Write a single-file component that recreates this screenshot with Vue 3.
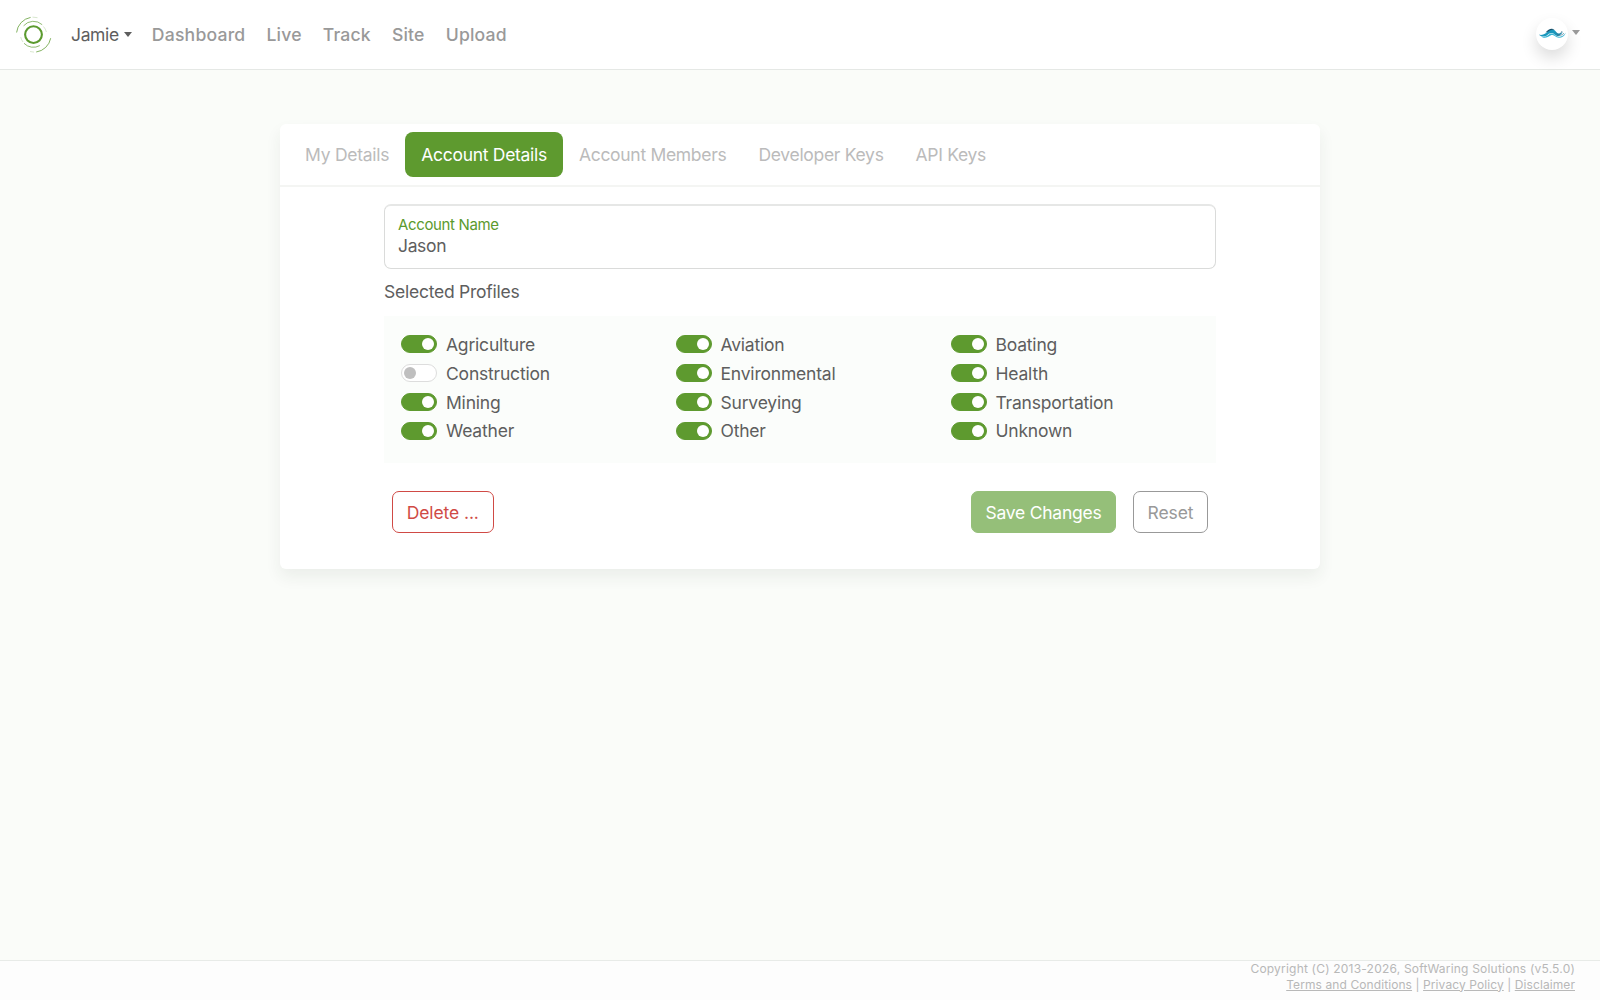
<script setup>
import { ref, reactive } from 'vue'

const links = ['Dashboard', 'Live', 'Track', 'Site', 'Upload']
const tabs = ['My Details', 'Account Details', 'Account Members', 'Developer Keys', 'API Keys']
const activeTab = ref('Account Details')
const accountName = ref('Jason')
const profiles = reactive([
  'Agriculture', 'Aviation', 'Boating',
  'Construction', 'Environmental', 'Health',
  'Mining', 'Surveying', 'Transportation',
  'Weather', 'Other', 'Unknown',
].map((name) => ({ name, on: name !== 'Construction' })))
</script>

<template>
  <div class="page">
    <header class="navbar">
      <svg class="logo" viewBox="0 0 36 38" fill="none" stroke="#5b9a2e">
        <circle cx="17.5" cy="18.6" r="8.4" stroke-width="2.1" />
        <path d="M.6 16.5A17.2 17.2 0 0 1 14.6 1.4M34.7 22.2A17.2 17.2 0 0 1 20.2 36" stroke-width="1" opacity=".75" />
        <path d="M7.6 9.8A13 13 0 0 1 26.2 8.7M23.8 29.6A13 13 0 0 1 8 27.3" stroke-width=".9" opacity=".75" />
        <path d="M16.5 1.1l5 .6M27.5 10.5a13 13 0 0 1 2.9 5.5M7 26a13 13 0 0 1-2.3-5M14 35.5l4 .6" stroke-width=".6" opacity=".4" />
      </svg>
      <button class="account">Jamie<i class="caret"></i></button>
      <nav class="links"><a v-for="l in links" :key="l">{{ l }}</a></nav>
      <button class="user" aria-label="User menu">
        <span class="avatar">
          <svg viewBox="0 0 28 12" width="29" height="12">
            <path d="M.5 6.500C4 8 8 5 10.500 2.500 13 .3 16 1.500 17.500 3.800 19 6 21 6.500 24.500 3.500 22 8.500 18.500 8.800 16 6.500 13.500 4.300 11.500 4.800 9 7 6 9.300 2.500 9 .5 6.500z" fill="#1b98bd" />
            <path d="M7 4.600C10 1 13.500-.3 16 2c-2.500-.8-4.500.2-6.500 1.800z" fill="#17506c" />
            <path d="M2.500 8.600c3 1 5.500-.2 7.500-1.900 2.500-2 4.500-1.500 6.500.4 3 2.800 7.500 2.400 10.900-2.600-1.300 3.700-3.900 5.300-6.900 5.300-4 0-5-4-8.500-2.300-2.500 1.300-5.500 3.800-9.500 1.100z" fill="#38b3d3" />
            <path d="M17.500 4.500c2 3 4.500 2.200 6-1.500M18 7.200c3 .8 5.500 0 7.500-2" fill="none" stroke="#35657f" stroke-width=".6" />
          </svg>
        </span>
        <i class="caret"></i>
      </button>
    </header>

    <main class="card">
      <nav class="tabs">
        <a v-for="t in tabs" :key="t" class="tab" :class="{ active: t === activeTab }">{{ t }}</a>
      </nav>
      <section class="body">
        <div class="field">
          <label>Account Name</label>
          <div class="value">{{ accountName }}</div>
        </div>
        <h2 class="title">Selected Profiles</h2>
        <div class="profiles">
          <div v-for="p in profiles" :key="p.name" class="profile">
            <i class="switch" :class="{ on: p.on }"></i>{{ p.name }}
          </div>
        </div>
        <div class="actions">
          <button class="btn danger">Delete ...</button>
          <button class="btn save">Save Changes</button>
          <button class="btn reset">Reset</button>
        </div>
      </section>
    </main>

    <footer class="footer">
      <div class="copy">Copyright (C) 2013-2026, SoftWaring Solutions (v5.5.0)</div>
      <div class="legal"><a>Terms and Conditions</a> | <a>Privacy Policy</a> | <a>Disclaimer</a></div>
    </footer>
  </div>
</template>

<style>
body { background: #fafcf9; }
</style>

<style scoped>
.page {
  height: 1000px;
  display: flex;
  flex-direction: column;
  font: 17.5px/27px Inter, "Liberation Sans", sans-serif;
  color: #5e5e5e;
}
button { font: inherit; background: none; border: 0; padding: 0; color: inherit; }
.caret {
  width: 0;
  height: 0;
  border: solid transparent;
  border-width: 5px 4.5px 0;
  border-top-color: currentColor;
}

.navbar {
  box-sizing: border-box;
  height: 70px;
  display: flex;
  align-items: center;
  background: #fff;
  border-bottom: 1px solid #e5e8e5;
  padding: 0 20px 0 16px;
}
.logo { width: 36px; height: 38px; }
.account {
  display: flex;
  align-items: center;
  gap: 5px;
  margin-left: 19px;
  letter-spacing: -.35px;
}
.links {
  display: flex;
  gap: 21px;
  margin-left: 20px;
  font-size: 17.6px;
  font-weight: 500;
  letter-spacing: .2px;
  color: #999;
}
.user { margin-left: auto; display: flex; align-items: center; gap: 4px; color: #999; }
.user .caret { margin-bottom: 4px; }
.avatar {
  width: 32px;
  height: 32px;
  margin-bottom: 1px;
  border-radius: 50%;
  background: #fff;
  display: flex;
  align-items: center;
  justify-content: center;
  box-shadow: 0 8px 16px rgba(0, 0, 0, .14);
}

.card {
  width: 1040px;
  height: 445px;
  margin: 54px auto 0;
  background: #fff;
  border-radius: 6px;
  box-shadow: 0 8px 16px rgba(40, 60, 40, .07);
}
.tabs { display: flex; padding: 8px 8px 8.5px; border-bottom: 2px solid #f4f5f3; }
.tab {
  padding: 9px 16px 8.5px;
  border-radius: 8px;
  letter-spacing: -.3px;
  color: #bbb;
}
.tab:first-child { padding-left: 17px; letter-spacing: -.25px; }
.tab.active { background: #5e9a2f; color: #fff; }

.body { padding: 17px 104px 0; }
.field {
  box-sizing: border-box;
  height: 65px;
  margin: 0 0 0 -.5px;
  border: 1px solid #dadbda;
  border-top: 2px solid #e6e7e6;
  border-radius: 7px;
  padding: 8px 13.5px;
}
.field label {
  display: block;
  font-size: 15px;
  line-height: 21px;
  letter-spacing: -.35px;
  color: #5b9a2e;
}
.value { line-height: 22px; letter-spacing: -.35px; }
.title { margin: 9px 0 11px; font-size: 17.5px; font-weight: 400; letter-spacing: -.24px; }
.profiles {
  box-sizing: border-box;
  height: 147px;
  padding: 14px 17px;
  display: grid;
  grid-template-columns: 274.5px 275px 1fr;
  grid-auto-rows: 28.85px;
  background: #fbfdfb;
}
.profile { display: flex; align-items: center; gap: 9px; letter-spacing: -.2px; }
.switch {
  box-sizing: border-box;
  width: 36px;
  height: 18px;
  border-radius: 9px;
  border: 1px solid #ddd;
  background: #fff;
  display: flex;
  align-items: center;
  padding: 0 2px;
}
.switch::before { content: ""; width: 12px; height: 12px; border-radius: 50%; background: #bfbfbf; }
.switch.on { background: #5e9a2f; border-color: #5e9a2f; justify-content: flex-end; }
.switch.on::before { background: #fff; }

.actions { display: flex; margin-top: 28px; padding: 0 8px; }
.btn {
  box-sizing: border-box;
  height: 42px;
  border: 1px solid;
  border-radius: 7px;
  display: flex;
  align-items: center;
  justify-content: center;
}
.danger { width: 101.5px; color: #d04a45; letter-spacing: -.1px; }
.save {
  width: 145px;
  margin-left: auto;
  background: #95bf79;
  border-color: #95bf79;
  color: #fff;
  letter-spacing: -.25px;
}
.reset { width: 75px; margin-left: 17px; color: #999; letter-spacing: -.1px; }

.footer {
  box-sizing: border-box;
  height: 40px;
  margin-top: auto;
  padding: 0 25px 0 0;
  border-top: 1px solid #e8ebe8;
  background: #fdfdfd;
  font-size: 12px;
  line-height: 15.5px;
  text-align: right;
  color: #b8b8b8;
}
.copy { letter-spacing: .2px; }
.legal { letter-spacing: .09px; }
.legal a { text-decoration: underline; }
</style>
